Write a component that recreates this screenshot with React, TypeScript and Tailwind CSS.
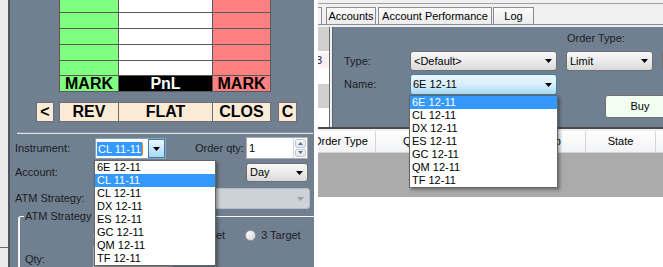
import { FC } from "react";
import clsx from "clsx";

const Arrow: FC<{ color?: string }> = ({ color = "#000" }) => (
  <svg width="7" height="4" viewBox="0 0 7 4" className="shrink-0">
    <polygon points="0,0 7,0 3.5,4" fill={color} />
  </svg>
);

const Combo: FC<{ text?: string; className?: string }> = ({ text, className }) => (
  <div
    className={clsx(
      "flex items-center justify-between rounded-[3px] border border-[#707070] bg-linear-to-b from-[#f7f7f7] via-[#ececec] to-[#d9d9d9] pl-[3px] pr-[4px] text-black",
      className
    )}
  >
    <span className="whitespace-nowrap">{text}</span>
    <Arrow />
  </div>
);

const Radio: FC<{ className?: string }> = ({ className }) => (
  <span
    className={clsx(
      "block h-[11px] w-[11px] shrink-0 rounded-full border border-[#9a9da2] bg-linear-to-br from-white to-[#d6d6d6]",
      className
    )}
  />
);

const DropList: FC<{ items: string[]; selected: number; className?: string }> = ({
  items,
  selected,
  className,
}) => (
  <div
    className={clsx(
      "absolute z-10 flex flex-col border border-[#646464] bg-white text-black shadow-[2px_2px_3px_rgba(0,0,0,0.35)]",
      className
    )}
  >
    {items.map((item, i) => (
      <div
        key={item}
        className={clsx(
          "flex h-[13px] items-center whitespace-nowrap pl-[2px]",
          i === selected && "bg-[#3399ff] text-white"
        )}
      >
        {item}
      </div>
    ))}
  </div>
);

const LeftPanel: FC = () => {
  const rows = [0, 1, 2, 3, 4];
  const btn =
    "flex items-center justify-center border border-[#6e6e6e] bg-[#faebd7] text-[16px] font-bold leading-none text-black";

  return (
    <div className="relative flex w-[314px] shrink-0">
      <div className="flex w-[10px] shrink-0 flex-col border-r-2 border-[#4f555c] bg-[#ebebeb]">
        <div className="h-[247px]" />
        <div className="h-px bg-[#6a6a6a]" />
      </div>
      <div className="relative flex min-w-0 flex-1 flex-col bg-[#708090]">
        {/* ladder */}
        <div className="ml-[49px] mt-[-4px] grid w-[212px] grid-cols-[58px_93px_57px] grid-rows-[15px_15px_15px_15px_14px_15px] gap-px border border-[#595959] bg-[#595959]">
          {rows.map((r) => (
            <div key={`g${r}`} className="contents">
              <div className="bg-[#80ff80]" />
              <div className="bg-white" />
              <div className="bg-[#ff8080]" />
            </div>
          ))}
          <div className="flex items-center justify-center bg-[#80ff80] text-[16px] font-bold leading-none text-black">
            MARK
          </div>
          <div className="flex items-center justify-center bg-black text-[16px] font-bold leading-none text-white">
            PnL
          </div>
          <div className="flex items-center justify-center bg-[#ff8080] text-[16px] font-bold leading-none text-black">
            MARK
          </div>
        </div>

        {/* buttons */}
        <div className="mt-[10px] flex h-[22px]">
          <div className={clsx(btn, "ml-[26px] w-[18px]")}>&lt;</div>
          <div className={clsx(btn, "ml-[5px] w-[60px]")}>REV</div>
          <div className={clsx(btn, "-ml-px w-[95px]")}>FLAT</div>
          <div className={clsx(btn, "-ml-px w-[59px]")}>CLOS</div>
          <div className={clsx(btn, "ml-[7px] w-[19px]")}>C</div>
        </div>

        <div className="ml-[7px] mr-px mt-[10px] h-[2px] border-t border-b border-t-[#8a96a2] border-b-[#dfe3e7]" />

        {/* instrument / order qty */}
        <div className="mt-[4px] flex h-[21px] items-center pl-[5px] text-[#1c1c24]">
          <span className="w-[80px] shrink-0">Instrument:</span>
          <div className="flex h-[21px] w-[71px] shrink-0 items-center border border-[#8ea3b8] bg-white pl-[1px]">
            <span className="bg-[#3399ff] px-px leading-[14px] text-white">CL 11-11</span>
            <span className="h-[12px] w-px bg-[#ff7f00]" />
            <div className="ml-auto flex h-[19px] w-[17px] items-center justify-center border border-[#3c7fb1] bg-linear-to-b from-[#eaf6fd] to-[#a7d9f5]">
              <Arrow />
            </div>
          </div>
          <span className="ml-[29px] w-[51px] shrink-0 whitespace-nowrap">Order qty:</span>
          <div className="-mt-px flex h-[22px] w-[62px] shrink-0 items-center border border-[#abadb3] bg-white pl-[2px] text-black">
            <span className="leading-[13px]">1</span>
            <div className="ml-auto flex h-full w-[14px] flex-col gap-px border-l border-[#d0d4da] p-px">
              <div className="flex flex-1 items-center justify-center rounded-[2px] border border-[#c3c9d1] bg-linear-to-b from-[#f4f6f9] to-[#dfe5ec]">
                <svg width="5" height="3" viewBox="0 0 5 3">
                  <polygon points="2.5,0 5,3 0,3" fill="#5870a0" />
                </svg>
              </div>
              <div className="flex flex-1 items-center justify-center rounded-[2px] border border-[#c3c9d1] bg-linear-to-b from-[#f4f6f9] to-[#dfe5ec]">
                <svg width="5" height="3" viewBox="0 0 5 3">
                  <polygon points="0,0 5,0 2.5,3" fill="#5870a0" />
                </svg>
              </div>
            </div>
          </div>
        </div>

        {/* account */}
        <div className="mt-[4px] flex h-[19px] items-center pl-[5px] text-[#1c1c24]">
          <span className="w-[80px]">Account:</span>
          <Combo text="Day" className="ml-auto mr-[6px] h-[19px] w-[62px]" />
        </div>

        {/* atm strategy */}
        <div className="mt-[6px] flex h-[21px] items-center pl-[5px] text-[#1c1c24]">
          <span className="w-[80px] shrink-0 whitespace-nowrap">ATM Strategy:</span>
          <div className="flex h-[21px] w-[215px] items-center justify-end rounded-[3px] border border-[#b4bcc5] bg-[#cdd2d8] pr-[5px]">
            <Arrow color="#9ea3a8" />
          </div>
        </div>

        {/* group box */}
        <div className="ml-[8px] mt-[7px] flex flex-1 flex-col rounded-tl-[3px] border-t border-l-2 border-[#f2f4f6] text-[#1c1c24]">
          <span className="-mt-[7px] ml-[4px] w-fit whitespace-nowrap bg-[#708090] px-px leading-[13px]">
            ATM Strategy parameters
          </span>
          <div className="mt-[6px] flex h-[13px] items-center">
            <Radio className="ml-[73px]" />
            <span className="ml-[5px] whitespace-nowrap">1 Target</span>
            <Radio className="ml-[21px]" />
            <span className="ml-[5px] whitespace-nowrap">2 Target</span>
            <Radio className="ml-[20px]" />
            <span className="ml-[5px] whitespace-nowrap">3 Target</span>
          </div>
          <div className="mt-[4px] flex h-[21px] items-start">
            <span className="mt-[7px] w-[73px] shrink-0 pl-[5px]">Qty:</span>
            <div className="h-[21px] w-[80px] border border-[#abadb3] bg-white" />
          </div>
        </div>

        <DropList
          className="left-[84px] top-[160px] w-[122px]"
          selected={1}
          items={[
            "6E 12-11",
            "CL 11-11",
            "CL 12-11",
            "DX 12-11",
            "ES 12-11",
            "GC 12-11",
            "QM 12-11",
            "TF 12-11",
          ]}
        />
      </div>
    </div>
  );
};

const RightPanel: FC = () => {
  const tab =
    "flex h-[17px] shrink-0 items-center justify-center whitespace-nowrap border border-b-0 border-[#898c95] bg-linear-to-b from-[#fbfbfb] to-[#ececec] text-black";

  return (
    <div className="relative flex w-[345px] shrink-0 flex-col overflow-hidden bg-white">
      <div className="h-[3px] bg-[#f0f0f0]" />
      <div className="h-px bg-[#a0a0a0]" />
      <div className="flex h-[21px] items-end border-b border-[#898c95] bg-[#f0f0f0]">
        <div className="h-[17px] w-[4px] shrink-0 border-r border-t border-[#898c95] bg-[#f4f4f4]" />
        <div className={clsx(tab, "ml-[4px] w-[50px]")}>Accounts</div>
        <div className={clsx(tab, "ml-[2px] w-[114px]")}>Account Performance</div>
        <div className={clsx(tab, "ml-px w-[41px]")}>Log</div>
      </div>
      <div className="h-[2px] bg-[#f0f0f0]" />

      <div className="flex h-[100px]">
        <div className="flex w-[12px] shrink-0 flex-col border-r border-[#6b6b6b]">
          <div className="h-[24px] bg-[#cfcfcf]" />
          <div className="h-[2px] bg-white" />
          <div className="flex h-[15px] items-center overflow-hidden bg-[#fff0f3] text-[#1a1a4a]">
            <span className="-ml-[2px]">3</span>
          </div>
          <div className="h-[16px] bg-white" />
          <div className="h-[24px] bg-[#cfcfcf]" />
          <div className="flex-1 bg-white" />
        </div>
        <div className="w-[2px] shrink-0 bg-[#f0f0f0]" />
        <div className="flex min-w-0 flex-1 flex-col border-l border-[#5a6470] bg-[#708090] text-[#1c1c24]">
          <div className="mt-[5px] h-[13px] whitespace-nowrap pl-[234px]">Order Type:</div>
          <div className="mt-[6px] flex h-[20px] items-center">
            <span className="w-[77px] shrink-0 pl-[11px]">Type:</span>
            <Combo text="<Default>" className="h-[20px] w-[147px] shrink-0" />
            <Combo text="Limit" className="ml-[9px] h-[20px] w-[87px] shrink-0" />
            <Combo className="ml-[9px] h-[20px] w-[40px] shrink-0" />
          </div>
          <div className="mt-[3px] flex h-[21px] items-center">
            <span className="w-[77px] shrink-0 pl-[11px]">Name:</span>
            <div className="flex h-[21px] w-[147px] shrink-0 items-center justify-between rounded-[3px] border border-[#3c7fb1] bg-linear-to-b from-[#eaf6fd] via-[#d9f0fc] to-[#a7d9f5] pl-[2px] pr-[4px] text-black">
              <span>6E 12-11</span>
              <Arrow />
            </div>
          </div>
          <div className="ml-[272px] flex h-[23px] w-[70px] shrink-0 items-center justify-center rounded-[3px] border border-[#707070] bg-[#f0fff0] text-black">
            Buy
          </div>
        </div>
      </div>

      <div className="h-[2px] bg-[#4a4a4a]" />
      <div className="h-[2px] bg-[#f0f0f0]" />
      <div className="flex h-[22px] items-center border-b border-[#d5d5d5] bg-linear-to-b from-white to-[#f1f2f4] text-black">
        <div className="flex h-full w-[58px] shrink-0 items-center border-r border-[#d5d5d5]">
          <span className="-ml-[5px] whitespace-nowrap">Order Type</span>
        </div>
        <div className="flex h-full w-[138px] shrink-0 items-center pl-[27px]">Qty</div>
        <div className="flex h-full w-[72px] shrink-0 items-center justify-center border-r border-[#d5d5d5]">
          Stop
        </div>
        <div className="flex h-full w-[70px] shrink-0 items-center justify-center border-r border-[#d5d5d5]">
          State
        </div>
        <div className="flex-1" />
      </div>
      <div className="h-[44px] bg-[#ababab]" />
      <div className="flex-1 bg-white" />

      <DropList
        className="left-[91px] top-[95px] w-[149px]"
        selected={0}
        items={["6E 12-11", "CL 12-11", "DX 12-11", "ES 12-11", "GC 12-11", "QM 12-11", "TF 12-11"]}
      />
    </div>
  );
};

export default function App() {
  return (
    <div className="flex h-[267px] w-[663px] overflow-hidden bg-white font-['Liberation_Sans',Arial,sans-serif] text-[11px] leading-[13px]">
      <LeftPanel />
      <div className="w-[4px] shrink-0 bg-white" />
      <RightPanel />
    </div>
  );
}
